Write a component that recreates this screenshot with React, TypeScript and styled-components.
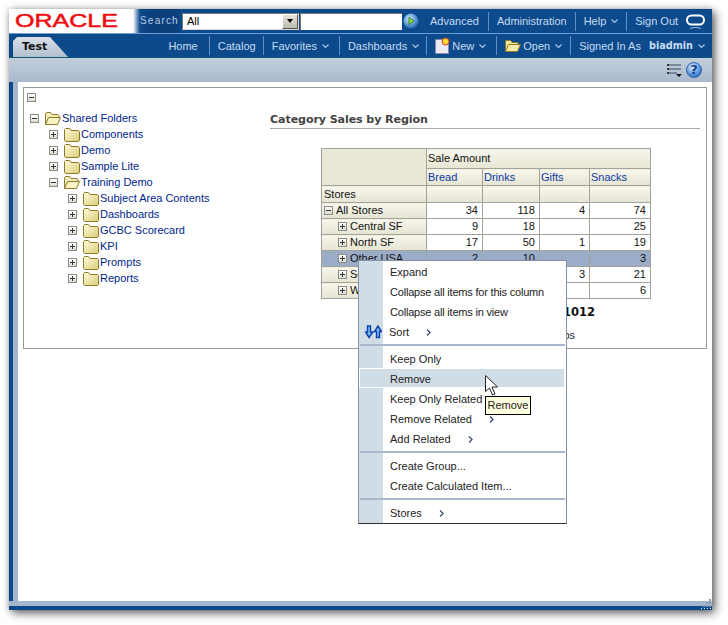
import React from "react";
import styled, { createGlobalStyle } from "styled-components";

const Global = createGlobalStyle`
  html, body { margin: 0; padding: 0; background: #fff; }
  body { font-family: "Liberation Sans", "DejaVu Sans", sans-serif; font-size: 11px; width: 728px; height: 625px; overflow: hidden; }
  #root { width: 728px; height: 625px; padding: 9px 0 0 9px; box-sizing: border-box; }
`;

const Win = styled.div`
  position: relative; width: 703px; height: 601px; display: flex; flex-direction: column;
  background: #fff; box-shadow: 3px 3px 9px rgba(0,0,0,.6), 0 0 6px rgba(0,0,0,.18);
`;
const TopBar = styled.div`
  height: 24px; flex: none; display: flex; align-items: center; background: #0d4a8c; border-bottom: 1px solid #6c9fd8; color: #c6dcf3;
`;
const LogoArea = styled.div`
  width: 131px; height: 24px; flex: none; background: linear-gradient(90deg, #fff 124px, #0d4a8c 131px); display: flex; align-items: center; padding-left: 6px; box-sizing: border-box;
`;
const LogoText = styled.span`
  font-family: "Liberation Sans", sans-serif; font-weight: 400; font-size: 18px; color: #f00d12; -webkit-text-stroke: .5px #f00d12; display: inline-block; transform: scaleX(1.39); transform-origin: 0 50%; line-height: 24px;
`;
const SearchLabel = styled.span`
  width: 42px; flex: none; font-size: 10px; letter-spacing: 1.2px; color: #b9cde4; line-height: 24px; height: 24px; box-sizing: border-box;
  background: linear-gradient(90deg, #0d4a8c 0, #0a3f7c 10px, #0a3f7c 36px, #0d4a8c 42px);
`;
const Select = styled.div`
  width: 117px; height: 17px; flex: none; box-sizing: border-box; background: #fff; color: #000; display: flex; justify-content: space-between; align-items: center; padding-left: 4px; border: 1px solid #d9d9d9; border-top-color: #777; border-left-color: #777; font-size: 11px;
`;
const SelectBtn = styled.span`
  width: 16px; height: 15px; background: linear-gradient(#e8e6dc, #bdbbb0); border: 1px solid; border-color: #fff #555 #555 #fff; box-sizing: border-box; display: flex; align-items: center; justify-content: center;
  &::after { content: ""; border: 3px solid transparent; border-top: 4px solid #000; border-bottom: 0; }
`;
const SearchInput = styled.div`
  width: 102px; height: 17px; flex: none; margin-left: 1px; background: #fff; border-top: 1px solid #777; border-left: 1px solid #777; box-sizing: border-box;
`;
const GoBtn = styled.svg` width: 16px; height: 16px; margin-left: 1px; flex: none; `;
const TopLinks = styled.div`
  display: flex; align-items: center; margin-left: 3px; height: 24px;
`;
const NavLink = styled.span<{ $sep?: boolean; $end?: number }>`
  display: inline-flex; align-items: center; gap: 5px; height: 19px; padding: 0 ${p => p.$end ?? 10}px 0 8px; white-space: nowrap; flex: none;
  border-right: ${p => (p.$sep ? "1px solid #5f8fc4" : "0")}; font-size: 11px; color: #c6dcf3;
`;
const Ring = styled.svg` width: 22px; height: 20px; margin: 3px 0 0 0; flex: none; `;
const NavBar = styled.div`
  height: 23px; flex: none; display: flex; justify-content: space-between; align-items: flex-end; background: #0d4a8c; border-bottom: 1px solid #0b5874;
`;
const Tab = styled.div`
  width: 59px; height: 20px; margin-left: 4px; background: linear-gradient(#d9e0e8, #b2c0d0); clip-path: polygon(0 100%, 0 4px, 4px 0, 37px 0, 55px 100%); font-weight: 700; color: #111; font-size: 11px; padding-left: 9px; box-sizing: border-box; line-height: 20px; font-family: "DejaVu Sans", sans-serif;
`;
const NavLinks = styled.div` display: flex; align-items: center; height: 23px; `;
const Strong = styled.b` font-family: "DejaVu Sans", sans-serif; font-size: 9.7px; margin-left: 3px; color: #c6dcf3; `;
const Toolbar = styled.div`
  height: 24px; flex: none; background: linear-gradient(#c2cedb, #a9b9cd); display: flex; justify-content: flex-end; align-items: center; gap: 4px; padding: 0 10px 0 0; box-sizing: border-box;
`;
const HelpBtn = styled.div`
  width: 16px; height: 16px; border-radius: 50%; background: radial-gradient(circle at 40% 30%, #e6f2ff, #4d8ed6 60%, #174f9c); border: 1px solid #2c64a8; box-sizing: border-box; color: #12418c; font: 700 13px/14px "DejaVu Sans", sans-serif; text-align: center;
`;
const Main = styled.div`
  flex: 1; display: flex; flex-direction: column; min-height: 0; border-left: 4px solid #0d4a8c; background: #fff; position: relative;
`;
const MainBody = styled.div`
  flex: 1; border-left: 5px solid #a6b6cc; padding: 5px 5px 0 5px; min-height: 0;
`;
const Footer = styled.div`
  position: relative; flex: none; height: 9px; box-sizing: border-box; background: #a6b6cc; border-bottom: 4px solid #0d4a8c; margin-left: -4px;
`;
const Grip = styled.svg` position: absolute; right: 0; bottom: -4px; width: 12px; height: 12px; `;
const Panel = styled.div`
  height: 262px; box-sizing: border-box; border: 1px solid #9a9a94; padding: 5px 3px 0 3px;
`;
const Columns = styled.div` display: flex; margin-top: 8px; `;
const Tree = styled.div` width: 243px; flex: none; `;
const TreeRow = styled.div<{ $depth: number }>`
  height: 16px; display: flex; align-items: center; padding-left: ${p => 3 + p.$depth * 19}px; color: #00268c; white-space: nowrap;
`;
const Toggle = styled.span`
  width: 9px; height: 9px; box-sizing: border-box; border: 1px solid #8d8d86; background: linear-gradient(#fff, #dcdccf); position: relative; flex: none; display: block;
  &::before { content: ""; position: absolute; left: 1px; right: 1px; top: 3px; height: 1px; background: #333; }
`;
const PlusToggle = styled(Toggle)`
  &::after { content: ""; position: absolute; top: 1px; bottom: 1px; left: 3px; width: 1px; background: #333; }
`;
const FolderSvg = styled.svg` width: 16px; height: 15px; margin: 0 1px 0 6px; flex: none; `;
const Report = styled.div` flex: 1; padding-top: 1px; `;
const Title = styled.div`
  font-family: "DejaVu Sans", sans-serif; font-weight: 700; font-size: 11.1px; color: #444; height: 17px; line-height: 18px; border-bottom: 1px solid #aaa; margin-right: 3px; letter-spacing: -.1px;
`;
const ChartTable = styled.table`
  border-collapse: collapse; table-layout: fixed; width: 329px; margin: 19px 0 0 51px; color: #111;
  td { border: 1px solid #a3a39a; padding: 0 2px 1px 1px; box-sizing: border-box; line-height: 14px; white-space: nowrap; overflow: hidden; }
`;
const Corner = styled.td` background: #e9e7d5; `;
const HeadCell = styled.td` background: linear-gradient(#f8f7ee, #e6e4d2); height: 17px; `;
const LinkCell = styled(HeadCell)` color: #0a3aa0; `;
const RowHead = styled.td<{ $depth?: number; $hot?: boolean }>`
  background: ${p => (p.$hot ? "#9bacc8" : "linear-gradient(#f8f7ee, #e6e4d2)")}; padding-left: ${p => 2 + (p.$depth || 0) * 14}px !important; height: 16px;
`;
const Num = styled.td<{ $hot?: boolean }>`
  background: ${p => (p.$hot ? "#9bacc8" : "#fff")}; text-align: right; padding-right: 4px !important;
`;
const RowLabel = styled.span` display: flex; align-items: center; gap: 3px; `;
const Total = styled.div` width: 325px; text-align: right; margin-top: 6px; font: 700 11.5px/14px "DejaVu Sans", sans-serif; color: #111; height: 14px; `;
const Note = styled.div` width: 305px; text-align: right; margin-top: 9px; line-height: 14px; color: #222; `;
const Menu = styled.div`
  position: absolute; left: 349px; top: 251px; width: 209px; height: 264px; box-sizing: border-box; border: 1px solid #8492a8; border-bottom-color: #333; padding: 1px 1px 0 1px; color: #222;
  background: linear-gradient(90deg, #d0dce6 24px, #fff 24px);
`;
const Item = styled.div<{ $hot?: boolean; $icon?: boolean; $tight?: boolean }>`
  height: ${p => (p.$hot ? "18px" : "20px")}; margin-bottom: ${p => (p.$hot ? "2px" : "0")}; padding-top: ${p => (p.$hot ? "2px" : "0")}; display: flex; align-items: center; padding-left: ${p => (p.$icon ? 5 : 30)}px; width: 204px; box-sizing: border-box; white-space: nowrap;
  background: ${p => (p.$hot ? "#d0dce6" : "transparent")}; outline: ${p => (p.$hot ? "1px solid #fff" : "none")};
  letter-spacing: ${p => (p.$tight ? "-.2px" : "0")};
`;
const SortIcon = styled.svg` width: 17px; height: 14px; margin-right: 7px; flex: none; `;
const Chev = styled.svg` width: 5px; height: 7px; margin-left: 17px; flex: none; `;
const Sep = styled.div` height: 2px; background: #a9b7cc; margin: 2px 0 3px 0; width: 205px; `;
const Tip = styled.div`
  position: absolute; left: 476px; top: 387px; width: 46px; height: 19px; box-sizing: border-box; background: #ffffe1; border: 1px solid #000; color: #222; text-align: center; line-height: 17px; font-size: 11px;
`;
const Cursor = styled.svg` position: absolute; left: 476px; top: 366px; width: 14px; height: 21px; `;

const Down = () => (
  <svg width="7" height="4" viewBox="0 0 7 4" style={{ flex: "none" }}>
    <path d="M.5.5l3 3 3-3" fill="none" stroke="#a9c8e8" strokeWidth="1.1" />
  </svg>
);
const Arrow = () => (
  <Chev viewBox="0 0 5 7"><path d="M1 .5l3 3-3 3" fill="none" stroke="#3c4e78" strokeWidth="1.3" /></Chev>
);
const Closed = () => (
  <FolderSvg viewBox="0 0 16 15">
    <defs><linearGradient id="fc" x1="0" y1="0" x2="1" y2="1"><stop offset="0" stopColor="#fffce0" /><stop offset="1" stopColor="#dccb74" /></linearGradient></defs>
    <path d="M.5 13.500V2.500l1-1h4l1.500 2h7.500l1 1v9l-1 1H1.500z" fill="url(#fc)" stroke="#8c7a28" />
  </FolderSvg>
);
const Opened = () => (
  <FolderSvg viewBox="0 0 16 15">
    <path d="M.5 13.500V2.500l1-1h4l1.500 2h6l1 1v2" fill="#f3ecb8" stroke="#8c7a28" />
    <path d="M.5 13.500l3-7h12l-3 7z" fill="#f8f2c4" stroke="#8c7a28" />
  </FolderSvg>
);
const children = ["Subject Area Contents", "Dashboards", "GCBC Scorecard", "KPI", "Prompts", "Reports"];
const rows = [
  { l: "Central SF", v: ["9", "18", "", "25"] },
  { l: "North SF", v: ["17", "50", "1", "19"] },
  { l: "Other USA", v: ["2", "10", "", "3"], hot: true },
  { l: "South USA", v: ["6", "40", "3", "21"] },
  { l: "West USA", v: ["0", "0", "", "6"] },
];

export default function App() {
  return (
    <Win>
      <Global />
      <TopBar>
        <LogoArea><LogoText>ORACLE</LogoText></LogoArea>
        <SearchLabel>Search</SearchLabel>
        <Select>All<SelectBtn /></Select>
        <SearchInput />
        <GoBtn viewBox="0 0 16 16">
          <defs><radialGradient id="go" cx=".4" cy=".35" r=".7"><stop offset="0" stopColor="#d6ecff" /><stop offset=".6" stopColor="#5c9ad8" /><stop offset="1" stopColor="#1a5aa8" /></radialGradient></defs>
          <circle cx="8" cy="8" r="7.5" fill="url(#go)" />
          <path d="M6 4.200l5 3.800-5 3.800z" fill="#8fd14f" stroke="#2e8a2e" />
        </GoBtn>
        <TopLinks>
          <NavLink $sep $end={9}>Advanced</NavLink>
          <NavLink $sep $end={8}>Administration</NavLink>
          <NavLink $sep $end={8}>Help <Down /></NavLink>
          <NavLink $end={7}>Sign Out</NavLink>
        </TopLinks>
        <Ring viewBox="0 0 22 20">
          <rect x="2" y="2.500" width="17" height="9" rx="4.500" fill="none" stroke="#fff" strokeWidth="2" />
          <path d="M5 15.500q6-2 11 0" fill="none" stroke="#8fb0d4" strokeWidth="1.200" />
        </Ring>
      </TopBar>
      <NavBar>
        <Tab>Test</Tab>
        <NavLinks>
          <NavLink $sep $end={11}>Home</NavLink>
          <NavLink $sep $end={7}>Catalog</NavLink>
          <NavLink $sep>Favorites <Down /></NavLink>
          <NavLink $sep $end={7}>Dashboards <Down /></NavLink>
          <NavLink $sep>
            <svg width="15" height="17" viewBox="0 0 15 17" style={{ marginRight: -3 }}>
              <path d="M.5 2.500h10l3 3v11H.5z" fill="#eceaf4" stroke="#8a8ab0" />
              <circle cx="10.500" cy="4.500" r="3.500" fill="#ffd83a" stroke="#d83a1a" />
            </svg>
            New <Down />
          </NavLink>
          <NavLink $sep $end={8}>
            <svg width="16" height="14" viewBox="0 0 16 14" style={{ marginRight: -3 }}>
              <path d="M.5 12.500V1.500h5l1.500 2h6v2" fill="#f3e89c" stroke="#8c7a28" />
              <path d="M.5 12.500l3-7h12l-3 7z" fill="#f6eca8" stroke="#8c7a28" />
            </svg>
            Open <Down />
          </NavLink>
          <NavLink $end={7}>Signed In As <Strong>biadmin</Strong> <Down /></NavLink>
        </NavLinks>
      </NavBar>
      <Toolbar>
        <svg width="15" height="14" viewBox="0 0 15 14">
          <path d="M1 2h13M1 6h13M1 10h9" stroke="#3c4a5c" strokeWidth="1.200" />
          <path d="M9 11h6l-3 3z" fill="#111" />
          <path d="M1 1v2M1 5v2M1 9v2" stroke="#111" strokeWidth="1.500" />
        </svg>
        <HelpBtn>?</HelpBtn>
      </Toolbar>
      <Main>
        <MainBody>
          <Panel>
            <Toggle />
            <Columns>
              <Tree>
                <TreeRow $depth={0}><Toggle /><Opened />Shared Folders</TreeRow>
                {["Components", "Demo", "Sample Lite"].map(t => (
                  <TreeRow $depth={1} key={t}><PlusToggle /><Closed />{t}</TreeRow>
                ))}
                <TreeRow $depth={1}><Toggle /><Opened />Training Demo</TreeRow>
                {children.map(t => (
                  <TreeRow $depth={2} key={t}><PlusToggle /><Closed />{t}</TreeRow>
                ))}
              </Tree>
              <Report>
                <Title>Category Sales by Region</Title>
                <ChartTable>
                  <colgroup><col width="105" /><col width="56" /><col width="57" /><col width="50" /><col width="61" /></colgroup>
                  <tbody>
                    <tr><Corner rowSpan={2} /><HeadCell colSpan={4} style={{ height: 20 }}>Sale Amount</HeadCell></tr>
                    <tr><LinkCell>Bread</LinkCell><LinkCell>Drinks</LinkCell><LinkCell>Gifts</LinkCell><LinkCell>Snacks</LinkCell></tr>
                    <tr><RowHead>Stores</RowHead><HeadCell /><HeadCell /><HeadCell /><HeadCell /></tr>
                    <tr>
                      <RowHead><RowLabel><Toggle />All Stores</RowLabel></RowHead>
                      <Num>34</Num><Num>118</Num><Num>4</Num><Num>74</Num>
                    </tr>
                    {rows.map(r => (
                      <tr key={r.l}>
                        <RowHead $depth={1} $hot={r.hot}><RowLabel><PlusToggle />{r.l}</RowLabel></RowHead>
                        {r.v.map((n, i) => <Num key={i} $hot={r.hot}>{n}</Num>)}
                      </tr>
                    ))}
                  </tbody>
                </ChartTable>
                <Total>1012</Total>
                <Note>Groups</Note>
              </Report>
            </Columns>
          </Panel>
        </MainBody>
        <Footer>
          <Grip viewBox="0 0 12 12">
            <path d="M9 1h2v2H9zM6 4h2v2H6zM9 4h2v2H9zM3 7h2v2H3zM6 7h2v2H6zM9 7h2v2H9z" fill="#8a97ac" />
            <path d="M1 10h1v1H1zM4 10h1v1H4zM7 10h1v1H7zM10 10h1v1h-1z" fill="#dfe6ef" />
          </Grip>
        </Footer>
      </Main>
      <Menu>
        <Item>Expand</Item>
        <Item $tight>Collapse all items for this column</Item>
        <Item $tight>Collapse all items in view</Item>
        <Item $icon>
          <SortIcon viewBox="0 0 17 14">
            <path d="M2.500 1h3v6h2.500L4 12.500 0.500 7h2z" fill="#7fb4f4" stroke="#0a3fae" strokeWidth="1.400" />
            <path d="M11.500 12.500h3v-6h2L13 1 9.500 6.500h2z" fill="#7fb4f4" stroke="#0a3fae" strokeWidth="1.400" />
          </SortIcon>
          Sort <Arrow />
        </Item>
        <Sep />
        <Item>Keep Only</Item>
        <Item $hot>Remove</Item>
        <Item>Keep Only Related</Item>
        <Item>Remove Related <Arrow /></Item>
        <Item>Add Related <Arrow /></Item>
        <Sep />
        <Item>Create Group...</Item>
        <Item>Create Calculated Item...</Item>
        <Sep />
        <Item>Stores <Arrow /></Item>
      </Menu>
      <Cursor viewBox="0 0 14 21"><path d="M.5.5v16l4-3.500 3 7 2.500-1-3-7h5.500z" fill="#fff" stroke="#222" /></Cursor>
      <Tip>Remove</Tip>
    </Win>
  );
}
